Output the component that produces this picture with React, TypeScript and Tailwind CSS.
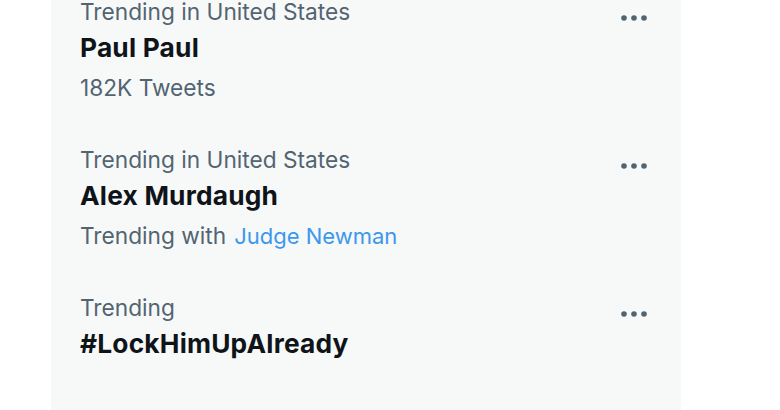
const trends = [
	{ context: "Trending in United States", title: "Paul Paul", meta: "182K Tweets" },
	{ context: "Trending in United States", title: "Alex Murdaugh", with: "Judge Newman" },
	{ context: "Trending", title: "#LockHimUpAlready" },
]

const MoreIcon = () => (
	<svg width="32" height="12" viewBox="0 0 32 12" className="fill-[#536471]">
		<circle cx="6" cy="6" r="2.8" />
		<circle cx="16" cy="6" r="2.8" />
		<circle cx="26" cy="6" r="2.8" />
	</svg>
)

export default function App() {
	return (
		<div className="w-[780px] h-[410px] overflow-hidden bg-white font-['Inter',sans-serif]">
			<div className="ml-[51px] w-[630px] h-full bg-[#f7f9f9] flex flex-col">
				<div className="-mt-6 flex flex-col">
					{trends.map((t, i) => (
						<div key={i} className="flex justify-between pl-[29px] pr-[31px] py-[22px]">
							<div className="flex flex-col">
								<div className="h-[28px] leading-[28px] text-[22.7px] text-[#536471]">{t.context}</div>
								<div className="mt-[7px] h-[30px] leading-[30px] text-[26.3px] font-bold tracking-[0.2px] text-[#0f1419]">
									{t.title}
								</div>
								{t.meta && (
									<div className="mt-[11px] h-[28px] leading-[28px] text-[22.7px] text-[#536471]">{t.meta}</div>
								)}
								{t.with && (
									<div className="mt-[11px] h-[28px] leading-[28px] text-[22.7px] text-[#536471] flex gap-[8px]">
										<span>Trending with</span>
										<span className="text-[#3d97ec] text-[22px]">{t.with}</span>
									</div>
								)}
							</div>
							<div className="pt-[14px]">
								<MoreIcon />
							</div>
						</div>
					))}
				</div>
			</div>
		</div>
	)
}
